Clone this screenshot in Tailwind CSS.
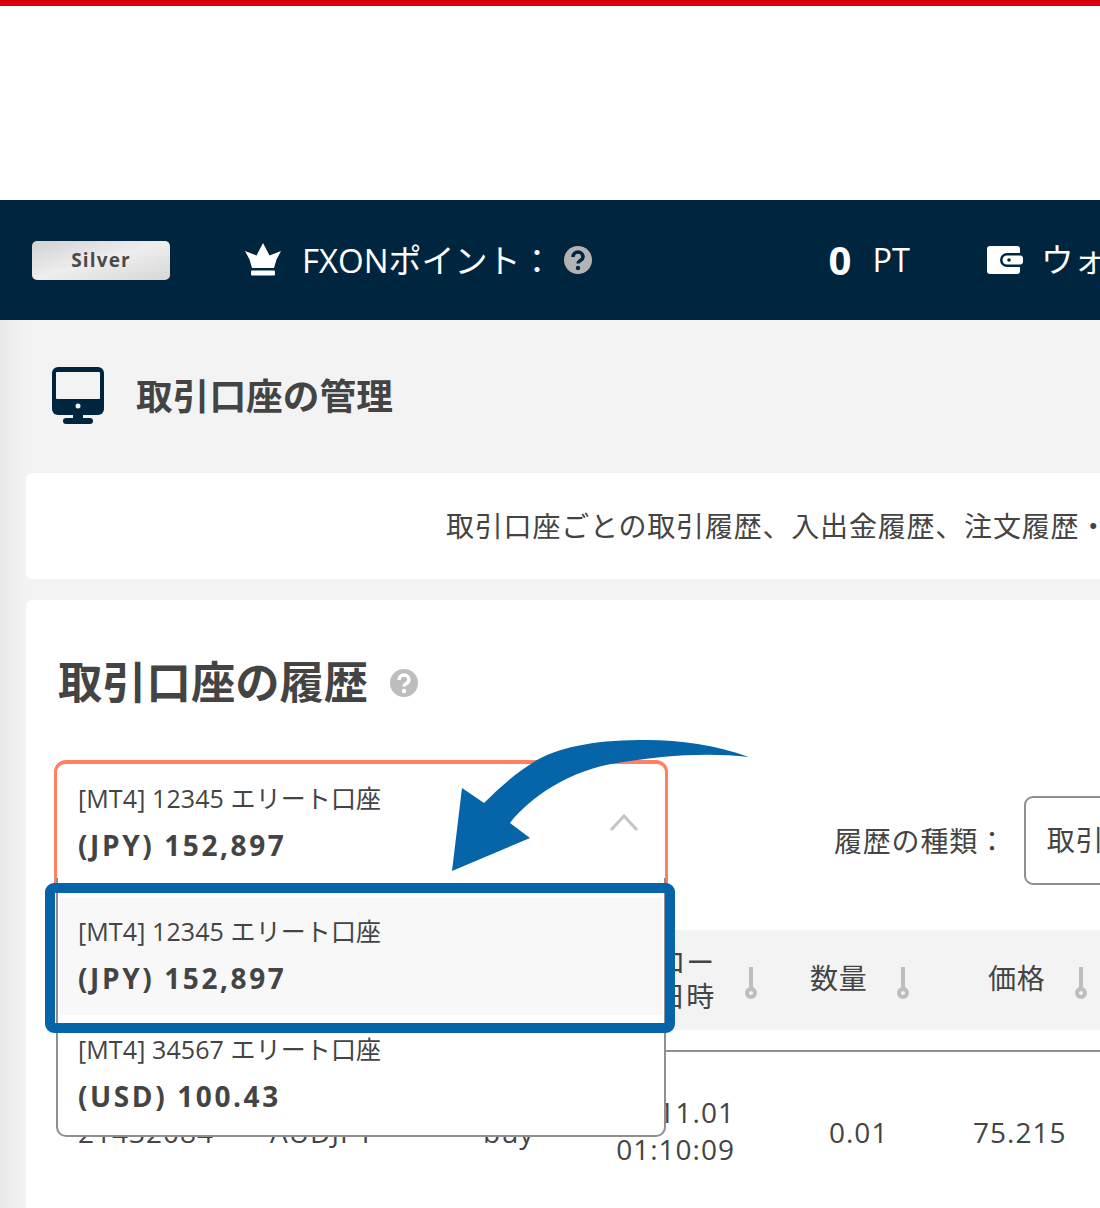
<!DOCTYPE html>
<html lang="ja">
<head>
<meta charset="utf-8">
<script src="https://cdn.jsdelivr.net/npm/@tailwindcss/browser@4"></script>
</head>
<body class="bg-white">
<div class="relative w-[1100px] h-[1208px] overflow-hidden bg-white text-[#444] font-['Open_Sans','Noto_Sans_CJK_JP',sans-serif]">
  <div class="h-[6px] bg-[#d7000f]"></div>
  <div class="h-[194px]"></div>

  <header class="h-[120px] bg-[#00253f] flex items-center pl-[32px] whitespace-nowrap text-white">
    <div class="w-[138px] h-[39px] mt-[1px] shrink-0 rounded-[5px] bg-gradient-to-br from-[#d2d2d2] via-[#eeeeee] to-[#d6d6d6] flex items-center justify-center text-[#4a4a4a] text-[19px] font-bold tracking-[0.06em]">Silver</div>
    <svg class="ml-[74px] shrink-0" width="38" height="34" viewBox="0 0 38 34"><path fill="#fff" d="M19 0l6.500 12.500L37 8l-4.500 8.500L30 25H8L5.500 16.500 1 8l11.500 4.500z"/><rect x="7" y="27.500" width="24" height="5" rx="1" fill="#fff"/></svg>
    <span class="ml-[20px] text-[33px] leading-none">FXONポイント：</span>
    <svg class="ml-[10px] shrink-0" width="28" height="28" viewBox="0 0 28 28"><circle cx="14" cy="14" r="14" fill="#b3b3b3"/><path d="M9 11a5 5 0 0 1 10 0c0 3.500-5 3.500-5 6.500" fill="none" stroke="#00253f" stroke-width="3.600"/><circle cx="14" cy="22" r="2.200" fill="#00253f"/></svg>
    <span class="ml-[237px] text-[40px] font-bold leading-none">0</span>
    <span class="ml-[21px] text-[32.5px] leading-none">PT</span>
    <svg class="ml-[77px] shrink-0" width="36" height="28" viewBox="0 0 36 28"><path fill="#fff" d="M3 0h27a3 3 0 0 1 3 3v4H20a7 7 0 0 0 0 14h13v4a3 3 0 0 1-3 3H3a3 3 0 0 1-3-3V3a3 3 0 0 1 3-3z"/><path fill="#fff" d="M20 9.500h13a3 3 0 0 1 3 3v3a3 3 0 0 1-3 3H20a4.500 4.500 0 0 1 0-9z"/><circle cx="22" cy="14" r="1.800" fill="#00253f"/></svg>
    <span class="ml-[18px] text-[32.5px] leading-none">ウォレット</span>
  </header>

  <main class="relative h-[888px] bg-[#f3f3f3] pl-[26px]">
    <div class="absolute left-0 top-0 bottom-0 w-[26px] bg-gradient-to-r from-[#e9e9e9] to-[#f3f3f3]"></div>

    <div class="relative h-[153px] flex items-center pl-[26px]">
      <svg class="shrink-0 mb-[2px]" width="52" height="58" viewBox="0 0 52 58"><path fill="#00253f" d="M6 0h40a6 6 0 0 1 6 6v36a6 6 0 0 1-6 6H6a6 6 0 0 1-6-6V6a6 6 0 0 1 6-6z"/><rect x="4" y="5" width="44" height="27" rx="1" fill="#f3f3f3"/><circle cx="26" cy="39" r="2.500" fill="#f3f3f3"/><path fill="#00253f" d="M21 46h10v5h7a3 3 0 0 1 0 6H14a3 3 0 0 1 0-6h7z"/></svg>
      <h1 class="ml-[32px] text-[36.7px] leading-none font-bold text-[#444] whitespace-nowrap">取引口座の管理</h1>
    </div>

    <section class="relative h-[106px] w-[1100px] bg-white rounded-[6px] pl-[420px] flex items-center whitespace-nowrap text-[28px] leading-none tracking-[0.8px]">
      取引口座ごとの取引履歴、入出金履歴、注文履歴・ポジション
    </section>

    <section class="relative mt-[21px] h-[700px] w-[1100px] bg-white rounded-[6px] pl-[32px] pt-[57px] whitespace-nowrap">
      <div class="flex items-center h-[50px]">
        <h2 class="text-[44.3px] leading-none font-bold text-[#444]">取引口座の履歴</h2>
        <svg class="ml-[22px] mt-[2px]" width="28" height="28" viewBox="0 0 28 28"><circle cx="14" cy="14" r="14" fill="#bdbdbd"/><path d="M9 11a5 5 0 0 1 10 0c0 3.500-5 3.500-5 6.500" fill="none" stroke="#fff" stroke-width="3.600"/><circle cx="14" cy="22" r="2.200" fill="#fff"/></svg>
      </div>

      <div class="flex items-end mt-[53px] h-[125px]">
        <div class="relative w-[614px] h-[125px] ml-[-4px] shrink-0 border-[3px] border-t-[4px] border-b-0 border-[#ff8162] rounded-t-[12px] pl-[21px] pt-[18px]">
          <div class="text-[25px] leading-[32px] tracking-[0.1px]">[MT4] 12345 エリート口座</div>
          <div class="mt-[15px] text-[28px] leading-[32px] font-bold tracking-[2.6px]">(JPY) 152,897</div>
          <svg class="absolute right-[26px] top-[49px]" width="30" height="18" viewBox="0 0 30 18"><path d="M2 17L15 3l13 14" fill="none" stroke="#c4c4c4" stroke-width="3"/></svg>
        </div>
        <div class="ml-[166px] mb-[30px] text-[28px] leading-none tracking-[0.8px]">履歴の種類：</div>
        <div class="ml-[17px] w-[200px] h-[89px] shrink-0 border-2 border-[#8f8f8f] rounded-[9px] pl-[21px] pb-[2px] flex items-center text-[28px] tracking-[0.8px] leading-none">取引履歴</div>
      </div>

      <div class="relative mt-[45px] h-[100px] w-[1100px] bg-[#f3f3f3] text-[28px] tracking-[0.8px]">
        <div class="absolute left-[567px] top-[15px] w-[90px] text-right leading-[34px]">クロー<br>ズ日時</div>
        <svg class="absolute left-[686px] top-[36px]" width="14" height="34" viewBox="0 0 14 34"><path d="M7 1v22" stroke="#bdbdbd" stroke-width="4"/><circle cx="7" cy="27" r="4" fill="none" stroke="#bdbdbd" stroke-width="4"/></svg>
        <span class="absolute left-[752px] top-[29px] leading-[38px]">数量</span>
        <svg class="absolute left-[838px] top-[36px]" width="14" height="34" viewBox="0 0 14 34"><path d="M7 1v22" stroke="#bdbdbd" stroke-width="4"/><circle cx="7" cy="27" r="4" fill="none" stroke="#bdbdbd" stroke-width="4"/></svg>
        <span class="absolute left-[930px] top-[29px] leading-[38px]">価格</span>
        <svg class="absolute left-[1016px] top-[36px]" width="14" height="34" viewBox="0 0 14 34"><path d="M7 1v22" stroke="#bdbdbd" stroke-width="4"/><circle cx="7" cy="27" r="4" fill="none" stroke="#bdbdbd" stroke-width="4"/></svg>
      </div>
      <div class="relative mt-[20px] h-[120px] w-[1100px] border-t-2 border-[#8f8f8f] text-[28px] leading-[38px] tracking-[1px]">
        <span class="absolute left-[20px] top-[61px]">21432084</span>
        <span class="absolute left-[212px] top-[61px]">AUDJPY</span>
        <span class="absolute left-[425px] top-[61px]">buy</span>
        <span class="absolute left-[476px] top-[42px] text-right w-[201px] leading-[37px]">2021.11.01<br>01:10:09</span>
        <span class="absolute left-[771px] top-[61px]">0.01</span>
        <span class="absolute left-[915px] top-[61px]">75.215</span>
      </div>

      <!-- open dropdown -->
      <div class="absolute left-[30px] top-[278px] w-[610px] h-[259px] bg-white border-2 border-t-0 border-[#8f8f8f] rounded-b-[10px]">
        <div class="h-[117px] bg-[#f8f8f8] pl-[20px] pt-[17px] ml-[2px] mr-[2px] mt-[20px]">
          <div class="ml-[-2px] text-[25px] leading-[32px] tracking-[0.1px]">[MT4] 12345 エリート口座</div>
          <div class="ml-[-2px] mt-[15px] text-[28px] leading-[32px] font-bold tracking-[2.6px]">(JPY) 152,897</div>
        </div>
        <div class="pl-[20px] pt-[18px]">
          <div class="text-[25px] leading-[32px] tracking-[0.1px]">[MT4] 34567 エリート口座</div>
          <div class="mt-[15px] text-[28px] leading-[32px] font-bold tracking-[2.6px]">(USD) 100.43</div>
        </div>
      </div>
    </section>
  </main>

  <!-- annotation highlight -->
  <div class="absolute left-[45px] top-[883px] w-[630px] h-[150px] border-[10px] border-[#0565a8] rounded-[9px]"></div>
  <!-- annotation arrow -->
  <svg class="absolute left-[440px] top-[730px]" width="320" height="150" viewBox="440 730 320 150">
    <path fill="#0565a8" d="M749 757C715 745 680 740 647 740C600 740 565 745 537 760C517 772 500 787 484 803L462 788L452 871L530 838L510 823C530 797 570 770 617 763C660 756 705 752 749 757Z"/>
  </svg>
</div>
</body>
</html>
